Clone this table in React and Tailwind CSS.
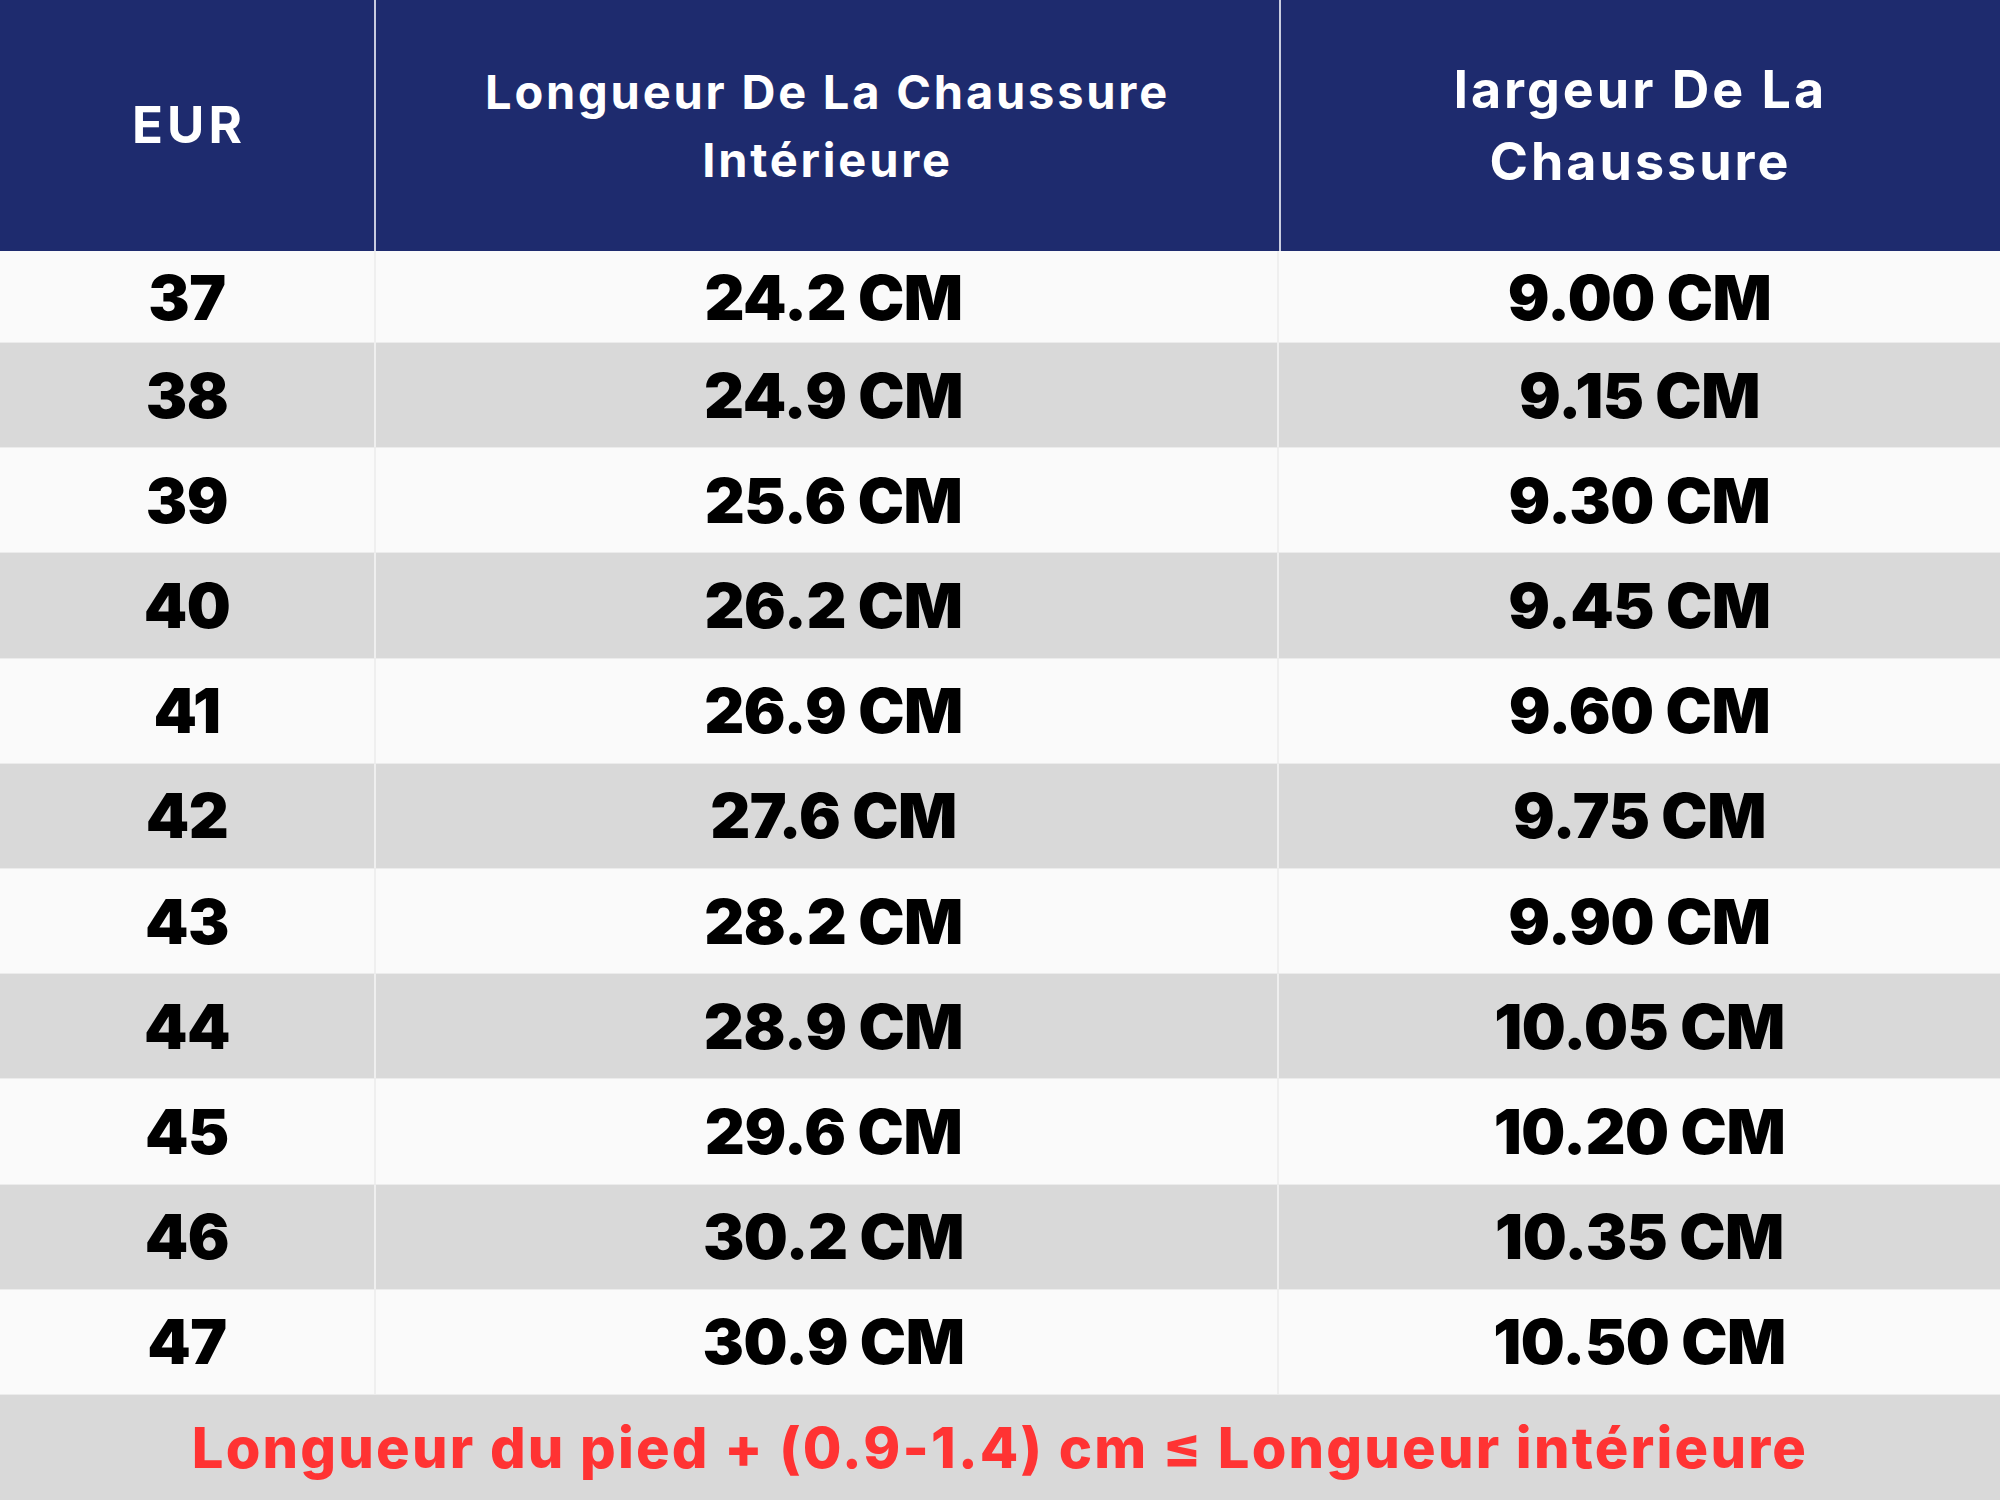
import React from "react";

const rows = [
  ["37", "24.2 CM", "9.00 CM"],
  ["38", "24.9 CM", "9.15 CM"],
  ["39", "25.6 CM", "9.30 CM"],
  ["40", "26.2 CM", "9.45 CM"],
  ["41", "26.9 CM", "9.60 CM"],
  ["42", "27.6 CM", "9.75 CM"],
  ["43", "28.2 CM", "9.90 CM"],
  ["44", "28.9 CM", "10.05 CM"],
  ["45", "29.6 CM", "10.20 CM"],
  ["46", "30.2 CM", "10.35 CM"],
  ["47", "30.9 CM", "10.50 CM"],
];

function Row({ r, i }) {
  const gray = i % 2 === 1;
  const bg = gray ? "bg-[#d9d9d9]" : "bg-[#fafafa]";
  const h = i === 0 ? "h-[92px]" : "flex-1";
  const inner = i === 0 ? "pb-[14px]" : "";
  return (
    <div className={`grid grid-cols-[376px_903px_1fr] shrink-0 ${h} ${bg} border-b border-[#ececec]`}>
      <div className={`flex items-center justify-center border-r-2 border-[#efefef] ${inner}`}>
        {r[0]}
      </div>
      <div className={`flex items-center justify-center border-r-2 border-[#efefef] pl-[14px] ${inner}`}>
        {r[1]}
      </div>
      <div className={`flex items-center justify-center ${inner}`}>{r[2]}</div>
    </div>
  );
}

export default function App() {
  return (
    <div className="w-[2000px] h-[1500px] flex flex-col font-['Inter','Noto_Sans',sans-serif] bg-[#fafafa] overflow-hidden">
      <div className="h-[251px] shrink-0 grid grid-cols-[376px_905px_1fr] bg-[#1e2b6e] text-white font-bold">
        <div className="flex items-center justify-center border-r-2 border-[#c9cce0] text-[51px] tracking-[4px] pl-[4px]">
          EUR
        </div>
        <div className="flex items-center justify-center border-r-2 border-[#c9cce0] text-[47px] leading-[68px] text-center tracking-[2.8px]">
          <div>
            Longueur De La Chaussure
            <br />
            Intérieure
          </div>
        </div>
        <div className="flex items-center justify-center text-[52px] leading-[72px] text-center tracking-[3px]">
          <div>
            largeur De La
            <br />
            Chaussure
          </div>
        </div>
      </div>
      <div className="flex-1 flex flex-col text-black font-black text-[62px] tracking-[-0.5px]">
        {rows.map((r, i) => (
          <Row key={r[0]} r={r} i={i} />
        ))}
      </div>
      <div className="h-[105px] shrink-0 bg-[#d9d9d9] flex items-center justify-center text-[#ff3333] font-extrabold text-[56px] tracking-[2.2px]">
        Longueur du pied + (0.9-1.4) cm ≤ Longueur intérieure
      </div>
    </div>
  );
}
